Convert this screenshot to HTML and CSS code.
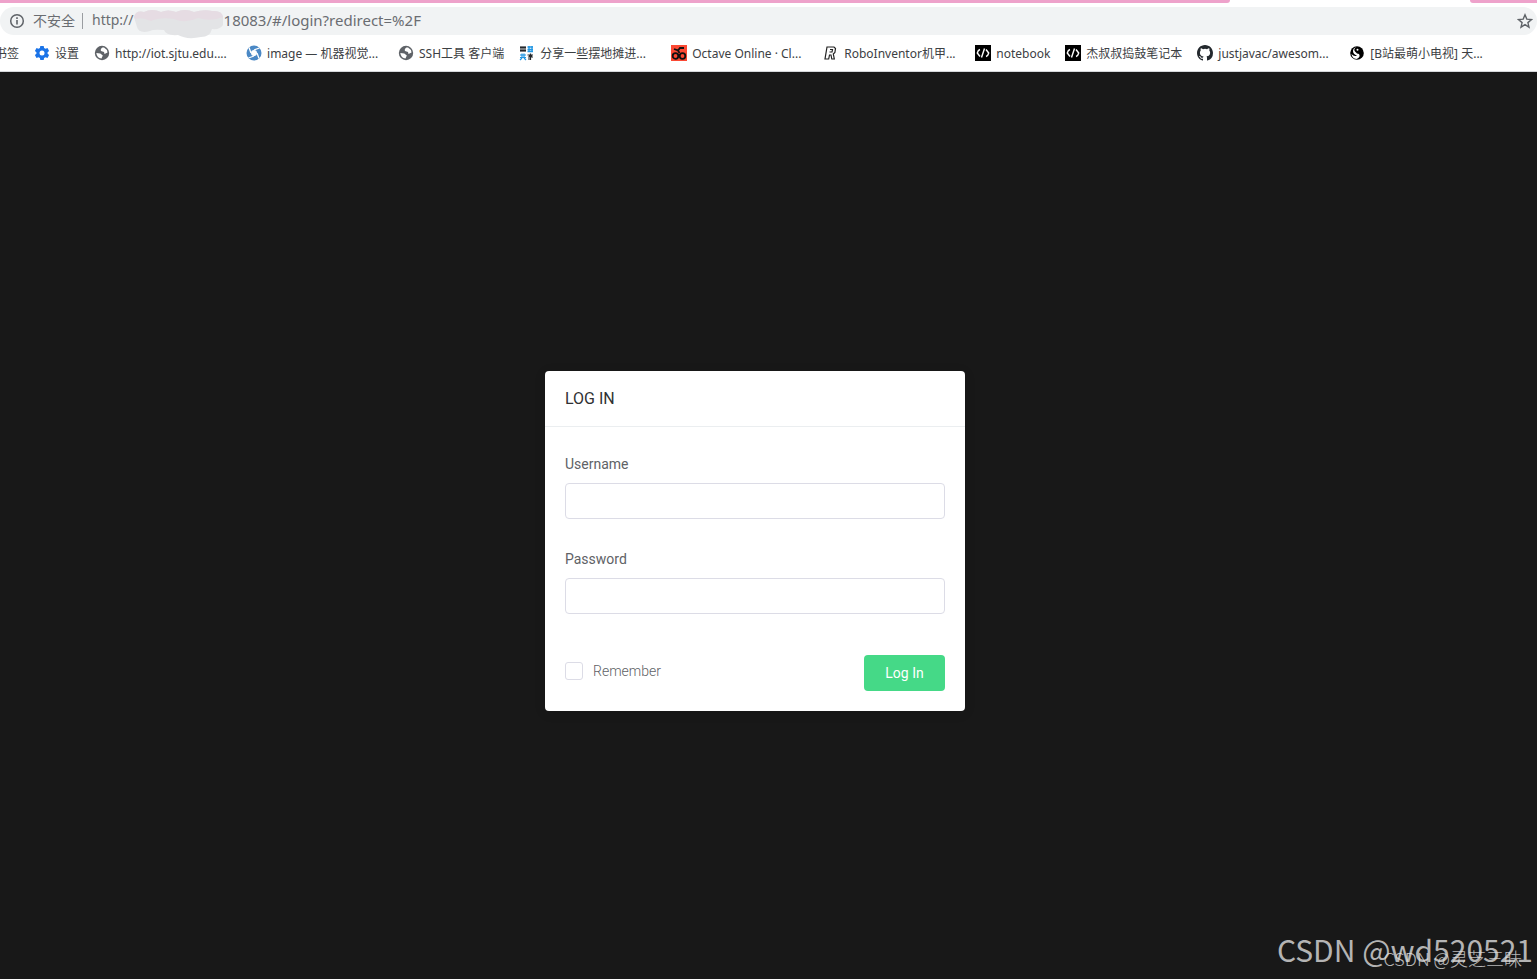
FILE: index.html
```
<!DOCTYPE html>
<html lang="zh-CN">

<head>
	<meta charset="utf-8">
	<title>Log In</title>
	<link rel="stylesheet" href="styles.css">
</head>

<body>
	<header class="browser">
		<div class="tabs">
			<div class="tab-left"></div>
			<div class="tab-right"></div>
		</div>
		<div class="address">
			<svg class="info" viewBox="0 0 16 16"><circle cx="8" cy="8" r="6.3" fill="none" stroke="#5f6368" stroke-width="1.5"/><path d="M8 7v4.5M8 4.3v1.6" stroke="#5f6368" stroke-width="1.6"/></svg>
			<span class="insecure">不安全</span>
			<span class="url">http://</span>
			<svg class="smudge" viewBox="0 0 90 30">
				<path d="M0 8Q2 1 10 3Q18-1 27 3Q34 0 42 3Q51-1 60 3Q70 0 78 2Q88 1 89 8V16Q86 21 78 20Q76 28 67 28Q53 31 44 26Q32 27 30 21Q19 20 16 22Q5 25 3 18Z" fill="#e3e4e6"/>
				<path d="M0 8Q2 1 10 3Q18-1 27 3Q34 0 42 3Q51-1 60 3Q70 0 78 2Q88 1 89 8Q77 13 64 9Q51 15 40 10Q26 8 17 12Q8 8 1 10Z" fill="#e6dce3"/>
			</svg>
			<span class="url">18083/#/login?redirect=%2F</span>
			<button class="star" type="button" aria-label="Bookmark">
				<svg viewBox="0 0 16 16"><path d="M8 1.8l1.8 4.3 4.7.4-3.6 3.1 1.1 4.6L8 11.7l-4 2.5 1.1-4.6L1.5 6.5l4.7-.4z" fill="none" stroke="#5f6368" stroke-width="1.4"/></svg>
			</button>
		</div>
		<nav class="bookmarks">
			<a href="#" class="first">书签</a>
			<a href="#">
				<svg viewBox="0 0 16 16"><path d="M6.3 1h3.4l.4 2 1.4.8 2-.7 1.600 2.900L13.600 7.300v1.400l1.500 1.300-1.600 2.900-2-.7-1.400.8-.4 2H6.300l-.4-2-1.400-.8-2 .7L.9 10l1.500-1.300V7.300L.9 6l1.600-2.900 2 .7L5.900 3z" fill="#1a73e8"/><circle cx="8" cy="8" r="2.5" fill="#fff"/></svg>
				<span>设置</span>
			</a>
			<a href="#" class="long">
				<svg viewBox="0 0 16 16"><circle cx="8" cy="8" r="7.2" fill="#5f6368"/><path d="M8.500 2.500Q6 4 7 6l3 1 .5 2 3-1.500Q13 4 10 2.500zM2.300 8l4 .5 2.500 2-1.300 3Q3 13 2.300 8z" fill="#fff"/></svg>
				<span>http://iot.sjtu.edu....</span>
			</a>
			<a href="#" class="long">
				<svg viewBox="0 0 16 16"><circle cx="8" cy="8" r="7.5" fill="#4a88c5"/><circle cx="8" cy="8" r="3" fill="#fff"/><path d="M8 5L13.500 3M11 8l2 5.500M8 11l-5.500 2M5 8L3 2.500" stroke="#fff" stroke-width="1.3"/></svg>
				<span>image — 机器视觉...</span>
			</a>
			<a href="#">
				<svg viewBox="0 0 16 16"><circle cx="8" cy="8" r="7.2" fill="#5f6368"/><path d="M8.500 2.500Q6 4 7 6l3 1 .5 2 3-1.500Q13 4 10 2.500zM2.300 8l4 .5 2.500 2-1.300 3Q3 13 2.300 8z" fill="#fff"/></svg>
				<span>SSH工具 客户端</span>
			</a>
			<a href="#" class="long">
				<svg viewBox="0 0 16 16"><path d="M2 1v6M1 2.500h6M4 1v6M1 5.500h6M6 1v6" stroke="#24282c" stroke-width="1.2"/><path d="M8.500 2H14M8.500 4.500H14M8.500 6.500H14M10 1v6M13 1v6" stroke="#2196e3" stroke-width="1.3"/><path d="M1 10h6M1 12.500h6M3 8.500v4M5 8.500v4M3 13l-2 2M5 13l2 2" stroke="#2196e3" stroke-width="1.2"/><path d="M8.500 10H14M11.500 8.500V15M9 12h5M9 14h3M10 11h3" stroke="#24282c" stroke-width="1.2"/></svg>
				<span>分享一些摆地摊进...</span>
			</a>
			<a href="#" class="long">
				<svg viewBox="0 0 16 16"><path d="M0 0h16v16H0z" fill="#fb4934"/><g fill="none" stroke="#111" stroke-width="1.8"><circle cx="4.500" cy="11" r="2.800"/><circle cx="11.500" cy="11" r="2.800"/><path d="M3 4l4 1.500L8.500 8M7 5.500L9 3h4"/></g></svg>
				<span>Octave Online · Cl...</span>
			</a>
			<a href="#" class="long">
				<svg viewBox="0 0 16 16"><path d="M4 2h7l1.500 1.500-.6 4-1.600 1.500 1 5H8.800L8 10H6.500l-.8 4H2zM7 4.500h2.500L9 7H6.500" fill="#fff" stroke="#222" stroke-width="1.2"/></svg>
				<span>RoboInventor机甲...</span>
			</a>
			<a href="#">
				<svg viewBox="0 0 16 16"><path d="M0 0h16v16H0z"/><path d="M5 4.500Q3 5 2.300 8L5 11.500M11 4.500l2.700 3.500Q13 11 11 11.500M9.500 3.500l-3 9" fill="none" stroke="#fff" stroke-width="1.4"/></svg>
				<span>notebook</span>
			</a>
			<a href="#">
				<svg viewBox="0 0 16 16"><path d="M0 0h16v16H0z"/><path d="M5 4.500Q3 5 2.300 8L5 11.500M11 4.500l2.700 3.500Q13 11 11 11.500M9.500 3.500l-3 9" fill="none" stroke="#fff" stroke-width="1.4"/></svg>
				<span>杰叔叔捣鼓笔记本</span>
			</a>
			<a href="#" class="long">
				<svg viewBox="0 0 16 16"><path fill="#24292e" d="M8 0C3.580 0 0 3.580 0 8c0 3.540 2.290 6.530 5.470 7.590.4.070.55-.17.55-.38 0-.19-.01-.82-.01-1.490-2.010.37-2.530-.49-2.690-.94-.09-.23-.48-.94-.82-1.130-.28-.15-.68-.52-.01-.53.63-.01 1.080.58 1.230.82.72 1.210 1.870.87 2.330.66.070-.52.28-.87.51-1.070-1.780-.2-3.640-.89-3.640-3.950 0-.87.31-1.590.82-2.150-.08-.2-.36-1.020.08-2.120 0 0 .67-.21 2.200.82a7.600 7.600 0 0 1 4 0c1.530-1.040 2.200-.82 2.200-.82.44 1.100.16 1.920.08 2.120.51.56.82 1.270.82 2.150 0 3.070-1.870 3.750-3.650 3.950.29.25.54.73.54 1.480 0 1.070-.01 1.930-.01 2.200 0 .21.15.46.55.38A8 8 0 0 0 16 8c0-4.420-3.580-8-8-8z"/></svg>
				<span>justjavac/awesom...</span>
			</a>
			<a href="#" class="long">
				<svg viewBox="0 0 16 16"><circle cx="8" cy="8" r="6.8"/><path d="M7.500 2Q4 4 6 6.500T10 9Q12 12 7.500 14 3 13.500 2.500 9 5 12 8 10.500 4 9 4 6T7.500 2z" fill="#fff"/><circle cx="8.500" cy="4.800" r="1" fill="#fff"/></svg>
				<span>[B站最萌小电视] 天...</span>
			</a>
		</nav>
	</header>

	<main class="page">
		<form class="card">
			<h1 class="card-header">LOG IN</h1>
			<div class="card-body">
				<div class="field">
					<label for="username">Username</label>
					<input id="username" type="text">
				</div>
				<div class="field">
					<label for="password">Password</label>
					<input id="password" type="password">
				</div>
				<div class="actions">
					<label class="remember"><input type="checkbox"> Remember</label>
					<button class="login" type="button">Log In</button>
				</div>
			</div>
		</form>
	</main>

	<div class="mark mark-large">CSDN @wd520521</div>
	<div class="mark mark-small">CSDN @灵芝三昧</div>
</body>

</html>
```
FILE: styles.css
```
* {
	box-sizing: border-box;
}

body {
	display: flex;
	flex-direction: column;
	min-height: 100vh;
	margin: 0;
	background: #181818;
	overflow: hidden;
	position: relative;
}

/* browser bars */
.browser {
	background: #fff;
	border-bottom: 1px solid #d5d7da;
	font-family: "Noto Sans", "Noto Sans CJK SC", sans-serif;
	overflow: hidden;
}

.tabs {
	display: flex;
	justify-content: space-between;
	height: 3px;
	margin-bottom: 4px;
}

.tab-left {
	width: 80%;
	background: #eea2cb;
	border-bottom-right-radius: 4px;
}

.tab-right {
	width: 67px;
	background: #eea2cb;
	border-bottom-left-radius: 4px;
}

.address {
	display: flex;
	align-items: center;
	height: 28px;
	padding: 0 4px 0 9px;
	border-radius: 14px;
	background: #f1f3f4;
	color: #6a6d72;
	font-size: 14px;
	white-space: nowrap;
}

.info {
	width: 16px;
	height: 16px;
	margin-right: 8px;
}

.insecure {
	padding-right: 7px;
	margin-right: 9px;
	border-right: 1px solid #9a9da1;
	line-height: 16px;
}

.url {
	line-height: 20px;
	padding-bottom: 2px;
}

.url:nth-of-type(n + 3) {
	font-size: 15px;
}

.smudge {
	width: 90px;
	height: 30px;
	margin-top: 6px;
	flex-shrink: 0;
}

.star {
	display: flex;
	margin-left: auto;
	padding: 0;
	border: 0;
	background: none;
}

.star svg {
	width: 16px;
	height: 16px;
}

.bookmarks {
	display: flex;
	align-items: center;
	height: 36px;
	font-size: 12px;
}

.bookmarks a {
	display: flex;
	align-items: center;
	flex-shrink: 0;
	gap: 5px;
	padding-right: 15px;
	color: #3c4043;
	text-decoration: none;
	white-space: nowrap;
}

.bookmarks .first {
	margin-left: -5px;
}

.bookmarks .long {
	width: 152px;
	padding-right: 0;
}

.bookmarks svg {
	width: 16px;
	height: 16px;
}

/* login page */
.page {
	flex: 1;
	display: flex;
	align-items: center;
	justify-content: center;
	padding: 31px 27px 0 0;
	font-family: Roboto, sans-serif;
}

.card {
	width: 420px;
	border-radius: 4px;
	background: #fff;
	box-shadow: 0 2px 12px rgba(0, 0, 0, 0.1);
}

.card-header {
	margin: 0;
	padding: 0 20px;
	border-bottom: 1px solid #ebeef0;
	color: #303133;
	font-size: 16px;
	font-weight: 400;
	line-height: 55px;
}

.card-body {
	padding: 20px;
	color: #606266;
	font-size: 14px;
}

.field {
	margin-bottom: 23px;
}

.field label {
	display: block;
	padding-bottom: 2px;
	line-height: 34px;
}

.field input {
	display: block;
	width: 100%;
	height: 36px;
	padding: 0 15px;
	border: 1px solid #dcdce6;
	border-radius: 4px;
}

.actions {
	display: flex;
	align-items: flex-start;
	justify-content: space-between;
	padding-top: 18px;
}

.remember {
	display: flex;
	align-items: center;
	gap: 10px;
	height: 32px;
	font-weight: 300;
}

.remember input {
	appearance: none;
	width: 18px;
	height: 18px;
	margin: 0;
	border: 1px solid #dcdce6;
	border-radius: 3px;
}

.login {
	min-width: 81px;
	height: 36px;
	padding: 0 20px;
	border: 0;
	border-radius: 4px;
	background: #45d987;
	color: #fff;
	font: 14px Roboto, sans-serif;
}

/* watermarks */
.mark {
	position: absolute;
	font-family: "Noto Sans CJK SC", sans-serif;
	white-space: nowrap;
}

.mark-large {
	right: 4px;
	bottom: 10px;
	color: #b4b4b4;
	font-size: 30px;
	line-height: 40px;
}

.mark-small {
	right: 15px;
	bottom: 8px;
	color: rgba(225, 225, 225, 0.8);
	font-size: 18px;
	font-weight: 300;
	line-height: 26px;
}
```
